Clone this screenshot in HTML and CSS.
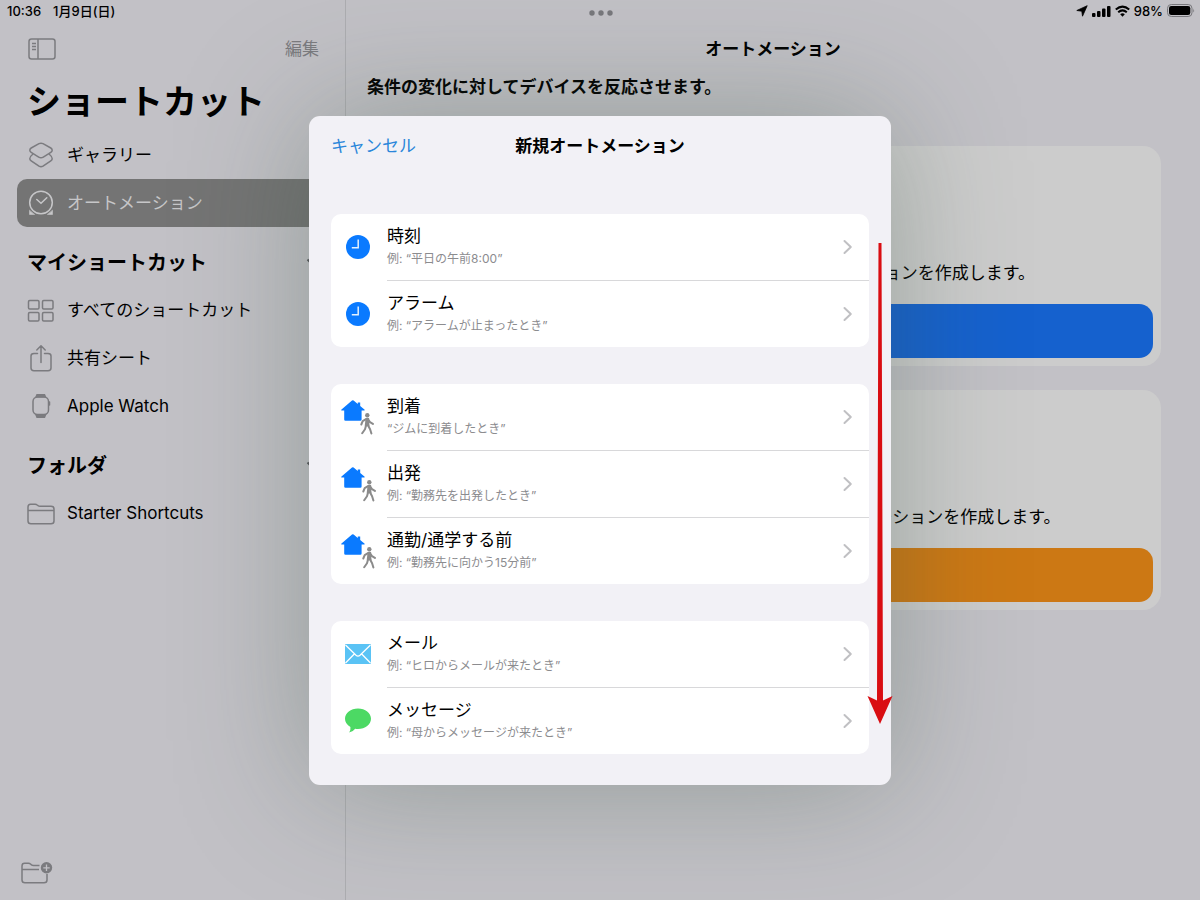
FILE: index.html
```html
<!DOCTYPE html>
<html lang="ja">
<head>
<meta charset="utf-8">
<meta name="viewport" content="width=device-width, initial-scale=1">
<title>ショートカット</title>
<link rel="stylesheet" href="styles.css">
</head>
<body>
<svg class="sprite" aria-hidden="true">
  <symbol id="chevron" viewBox="0 0 10 16"><path d="M1.500 2l6.300 6-6.300 6" fill="none" stroke="currentColor" stroke-width="2" stroke-linecap="round" stroke-linejoin="round"/></symbol>
  <symbol id="clock" viewBox="0 0 24 24"><circle cx="12" cy="12" r="12" fill="#0a7aff"/><path d="M12.200 4.500v8.200H5.800" fill="none" stroke="#e3f1ff" stroke-width="1.500"/></symbol>
  <symbol id="house" viewBox="0 0 24 22"><path d="M11 .6q.8-.6 1.600 0L16.800 4V2.600h2.400V6l4.200 3.500q.6.600 0 1h-2.800v9q0 1.300-1.300 1.300H4.500q-1.300 0-1.300-1.300v-9H.5q-.7-.4 0-1z" fill="#0a7aff"/></symbol>
  <symbol id="walker" viewBox="0 0 14 22"><circle cx="7.300" cy="2.300" r="2.200" fill="#8b8b8b"/><path d="M6 6.200L2.700 8.200 1.300 11.500M8 6.400l2 2.800 2.900 1.700M6.200 12L5 16.300 2.200 20.300M7.800 12l2.300 4.200 1.300 4.300" fill="none" stroke="#8b8b8b" stroke-width="2" stroke-linecap="round" stroke-linejoin="round"/><path d="M5.600 5q1.700-.7 3.500 0l.4 8.300H4.700z" fill="#8b8b8b"/></symbol>
</svg>

<div class="app">
  <aside class="sidebar">
    <div class="toolbar">
      <button class="plain" aria-label="サイドバー">
        <svg width="28" height="22" viewBox="0 0 28 22" fill="none" stroke="currentColor" stroke-width="1.500"><rect x="1" y="1" width="26" height="20" rx="2.500"/><path d="M10 1v20M4 5.500h4M4 8.500h4M4 11.500h4"/></svg>
      </button>
      <button class="plain edit">編集</button>
    </div>
    <h1 class="title">ショートカット</h1>
    <nav>
      <ul class="nav">
        <li><a class="item" href="#">
          <svg width="28" height="28" viewBox="0 0 28 28" fill="none" stroke="currentColor" stroke-width="1.500" stroke-linejoin="round"><path d="M12 2.700q2-1 4 0l7.800 4.300q1.400.9 1.400 2.200t-1.400 2.200l-7.500 4.700q-2.300 1.400-4.600 0l-7.500-4.700Q2.800 10.500 2.800 9.200T4.200 7z"/><path d="M6 13q-3.200 2.500-3.200 4.700 0 1.200 1.400 2.100l7.800 5.400q2 1.200 4 0l7.800-5.400q1.400-.9 1.400-2.100Q25.200 15.500 22 13"/></svg>
          <span>ギャラリー</span></a></li>
        <li><a class="item selected" href="#" aria-current="page">
          <svg width="28" height="28" viewBox="0 0 28 28" fill="none" stroke="currentColor" stroke-width="1.500" stroke-linecap="round"><circle cx="14" cy="13.500" r="11.300"/><path d="M9.800 10.500l4.200 3.800 5.800-5.600"/><path d="M2.500 21.500v4h4.800zM25.500 21.500v4h-4.800z" fill="currentColor" stroke-width=".6"/></svg>
          <span>オートメーション</span></a></li>
      </ul>
      <h2 class="section">マイショートカット
        <svg class="caret" width="14" height="9" viewBox="0 0 14 9"><path d="M1.500 1.500L7 7l5.500-5.500" fill="none" stroke="currentColor" stroke-width="2"/></svg></h2>
      <ul class="nav">
        <li><a class="item" href="#">
          <svg width="28" height="28" viewBox="0 0 28 28" fill="none" stroke="currentColor" stroke-width="1.500"><rect x="1.500" y="4.500" width="10.500" height="8.500" rx="1.200"/><rect x="15.500" y="4.500" width="10.500" height="8.500" rx="1.200"/><rect x="1.500" y="16.500" width="10.500" height="8.500" rx="1.200"/><rect x="15.500" y="16.500" width="10.500" height="8.500" rx="1.200"/></svg>
          <span>すべてのショートカット</span></a></li>
        <li><a class="item" href="#">
          <svg width="28" height="28" viewBox="0 0 28 28" fill="none" stroke="currentColor" stroke-width="1.500" stroke-linecap="round" stroke-linejoin="round"><path d="M10.500 9.500H7Q4 9.500 4 12v12q0 2.700 3 2.700h14q3 0 3-2.700V12q0-2.500-3-2.500h-3.500M14 18.500V2M9.800 6L14 1.800 18.200 6"/></svg>
          <span>共有シート</span></a></li>
        <li><a class="item" href="#">
          <svg width="28" height="28" viewBox="0 0 28 28"><rect x="6" y="5" width="15.500" height="17.500" rx="4.500" fill="none" stroke="currentColor" stroke-width="1.500"/><path d="M9.500 2H18l1.500 3.500H8zM8 22.300h11.500L18 26H9.500z" fill="currentColor"/><path d="M22.500 10v3" stroke="currentColor" stroke-width="1.500" stroke-linecap="round"/></svg>
          <span>Apple Watch</span></a></li>
      </ul>
      <h2 class="section">フォルダ
        <svg class="caret" width="14" height="9" viewBox="0 0 14 9"><path d="M1.500 1.500L7 7l5.500-5.500" fill="none" stroke="currentColor" stroke-width="2"/></svg></h2>
      <ul class="nav">
        <li><a class="item" href="#">
          <svg width="28" height="28" viewBox="0 0 28 28" fill="none" stroke="currentColor" stroke-width="1.500" stroke-linejoin="round"><path d="M1 11.500h26M1 8q0-2.800 2.500-2.800h4.700q1.200 0 2 .8l.9.700q.7.600 2 .600h10.900Q27 7.300 27 10v12q0 2.800-3 2.800H4q-3 0-3-2.800z"/></svg>
          <span>Starter Shortcuts</span></a></li>
      </ul>
    </nav>
    <button class="plain new-folder" aria-label="新規フォルダ">
      <svg width="32" height="24" viewBox="0 0 32 24" fill="none" stroke="currentColor" stroke-width="1.500" stroke-linejoin="round"><path d="M18.500 4.500h-6q-1.300 0-2-.6l-1-.9q-.8-.7-2-.700H3.500Q1 2.300 1 5v14q0 2.800 3 2.800h19q3 0 3-2.800v-6M1 8.500h17"/><circle cx="25.500" cy="6.800" r="5.700" fill="currentColor" stroke="none"/><path d="M25.500 3.600V10M22.300 6.800h6.400" stroke="#c2c1c6" stroke-width="1.300"/></svg>
    </button>
  </aside>

  <main class="main">
    <h2 class="main-title">オートメーション</h2>
    <p class="lead">条件の変化に対してデバイスを反応させます。</p>
    <div class="cards">
      <section class="card">
        <h3 class="card-title">個人用オートメーション</h3>
        <p class="card-text">自分のデバイスで実行できる個人用オートメーションを作成します。</p>
        <button class="create create-blue">個人用オートメーションを作成</button>
      </section>
      <section class="card">
        <h3 class="card-title">ホームオートメーション</h3>
        <p class="card-text">ホームにいる全員のために実行するホームオートメーションを作成します。</p>
        <button class="create create-orange">ホームオートメーションを作成</button>
      </section>
    </div>
  </main>
</div>

<header class="status">
  <div class="status-side"><span>10:36</span><span>1月9日(日)</span></div>
  <svg width="24" height="6" viewBox="0 0 24 6" fill="#77777b"><circle cx="3" cy="3" r="2.700"/><circle cx="12" cy="3" r="2.700"/><circle cx="21" cy="3" r="2.700"/></svg>
  <div class="status-side status-right">
    <svg width="12" height="12" viewBox="0 0 12 12"><path d="M11.200.7L6.500 11.200 5.800 6.200.8 5.500z" stroke="#000" stroke-width=".8" stroke-linejoin="round"/></svg>
    <svg width="19" height="12" viewBox="0 0 19 12"><rect y="8" width="3.500" height="4" rx="1"/><rect x="5" y="6" width="3.500" height="6" rx="1"/><rect x="10" y="3.500" width="3.500" height="8.500" rx="1"/><rect x="15" y="1" width="3.500" height="11" rx="1"/></svg>
    <svg width="15" height="12" viewBox="0 0 15 12" fill="none" stroke="#000" stroke-width="2"><path d="M.8 4.600q6.700-6 13.400 0M3.200 7.300q4.300-3.800 8.600 0"/><path d="M7.500 11.700L5.200 9.300q2.300-1.900 4.600 0z" fill="#000" stroke="none"/></svg>
    <span>98%</span>
    <svg width="28" height="13" viewBox="0 0 28 13"><rect x=".5" y=".5" width="24.500" height="12" rx="3.800" fill="none" stroke="#77777b"/><rect x="2" y="2" width="21.300" height="9" rx="2.300"/><path d="M26.300 4.500q1.500 2 0 4z" fill="#77777b"/></svg>
  </div>
</header>

<div class="overlay">
  <div class="modal" role="dialog" aria-labelledby="modal-title">
    <div class="modal-head">
      <button class="cancel">キャンセル</button>
      <h2 class="modal-title" id="modal-title">新規オートメーション</h2>
    </div>
    <ul class="group">
      <li><button class="row"><span class="icon"><svg width="24" height="24"><use href="#clock"/></svg></span>
        <span class="body"><span class="text"><span class="name">時刻</span><span class="hint">例: “平日の午前8:00”</span></span><svg class="chev" width="10" height="16"><use href="#chevron"/></svg></span></button></li>
      <li><button class="row"><span class="icon"><svg width="24" height="24"><use href="#clock"/></svg></span>
        <span class="body"><span class="text"><span class="name">アラーム</span><span class="hint">例: “アラームが止まったとき”</span></span><svg class="chev" width="10" height="16"><use href="#chevron"/></svg></span></button></li>
    </ul>
    <ul class="group">
      <li><button class="row"><span class="icon"><svg width="54" height="66"><use href="#house" x="10" y="16" width="24" height="22"/><use href="#walker" x="29" y="29" width="14" height="22"/></svg></span>
        <span class="body"><span class="text"><span class="name">到着</span><span class="hint">“ジムに到着したとき”</span></span><svg class="chev" width="10" height="16"><use href="#chevron"/></svg></span></button></li>
      <li><button class="row"><span class="icon"><svg width="54" height="66"><use href="#house" x="10" y="16" width="24" height="22"/><use href="#walker" x="31" y="29" width="14" height="22"/></svg></span>
        <span class="body"><span class="text"><span class="name">出発</span><span class="hint">例: “勤務先を出発したとき”</span></span><svg class="chev" width="10" height="16"><use href="#chevron"/></svg></span></button></li>
      <li><button class="row"><span class="icon"><svg width="54" height="66"><use href="#house" x="10" y="16" width="24" height="22"/><use href="#walker" x="31" y="29" width="14" height="22"/></svg></span>
        <span class="body"><span class="text"><span class="name">通勤/通学する前</span><span class="hint">例: “勤務先に向かう15分前”</span></span><svg class="chev" width="10" height="16"><use href="#chevron"/></svg></span></button></li>
    </ul>
    <ul class="group">
      <li><button class="row"><span class="icon"><svg width="26" height="20" viewBox="0 0 26 20"><rect width="26" height="20" rx="1" fill="#5ac3f5"/><path d="M.5 1l10.500 10.300q2 1.700 4 0L25.500 1M.5 19l8.800-9M25.500 19l-8.800-9" fill="none" stroke="#fff" stroke-width="1.300"/></svg></span>
        <span class="body"><span class="text"><span class="name">メール</span><span class="hint">例: “ヒロからメールが来たとき”</span></span><svg class="chev" width="10" height="16"><use href="#chevron"/></svg></span></button></li>
      <li><button class="row"><span class="icon"><svg width="26" height="25" viewBox="0 0 26 25"><path d="M13 .5C20.200.5 26 5 26 10.800S20.200 21 13 21q-1.400 0-2.800-.3-2.500 3.300-6 3.800 1.700-2.200 1.200-5.600Q0 16 0 10.800C0 5 5.800.5 13 .5z" fill="#4cd964"/></svg></span>
        <span class="body"><span class="text"><span class="name">メッセージ</span><span class="hint">例: “母からメッセージが来たとき”</span></span><svg class="chev" width="10" height="16"><use href="#chevron"/></svg></span></button></li>
    </ul>
    <svg class="arrow" width="26" height="482" viewBox="0 0 26 482"><path d="M11.500 0h3L16 457.500l9.500-4.500L13 481 .5 453l9.500 4.500z" fill="#d90d12"/></svg>
  </div>
</div>
</body>
</html>
```
FILE: styles.css
```css
* { box-sizing: border-box; }

body {
  margin: 0;
  background: #c2c1c6;
  color: #000;
  font: 17px/24px Inter, "Noto Sans CJK JP", sans-serif;
}

h1, h2, h3, p, ul { margin: 0; padding: 0; }
ul { list-style: none; }
svg { display: block; flex: none; }
button { font: inherit; border: 0; cursor: pointer; }
.sprite { position: absolute; width: 0; height: 0; }

.app {
  display: grid;
  grid-template-columns: 346px 1fr;
  min-height: 100vh;
}

/* Status bar */
.status {
  position: absolute;
  inset: 0 0 auto;
  display: grid;
  grid-template-columns: 1fr auto 1fr;
  align-items: center;
  height: 21px;
  padding: 0 5px 0 7px;
  font-size: 13px;
  font-weight: 500;
  line-height: 20px;
}
.status > svg { margin-top: 5px; }
.status-side { display: flex; align-items: center; gap: 12px; }
.status-right { justify-content: flex-end; gap: 4px; }

/* Sidebar */
.sidebar {
  display: flex;
  flex-direction: column;
  padding: 37px 17px 15px;
  border-right: 1px solid #adadb1;
}
.plain { padding: 0; background: none; color: #7b7b7f; }
.toolbar {
  display: flex;
  justify-content: space-between;
  align-items: center;
  height: 24px;
  padding: 0 9px 0 11px;
}
.title {
  padding: 15px 10px 4px;
  font-size: 34px;
  line-height: 51px;
}
.item {
  display: flex;
  align-items: center;
  gap: 12px;
  height: 48px;
  padding: 0 10px;
  border-radius: 10px;
  color: #000;
  text-decoration: none;
}
.item svg { color: #7b7b7f; }
.item.selected, .item.selected svg { color: #c6c6c8; }
.item.selected { background: #747474; }
.section {
  display: flex;
  justify-content: space-between;
  align-items: center;
  height: 59px;
  padding: 12px 8px 0 10px;
  font-size: 20px;
}
.caret { color: #55555a; }
.new-folder { align-self: flex-start; margin: auto 0 0 4px; }

/* Main pane */
.main { padding-top: 37px; }
.main-title { font-size: 17px; text-align: center; }
.lead { padding: 14px 21px 0; font-weight: 600; }
.cards {
  display: grid;
  gap: 24px;
  padding: 47px 39px;
}
.card {
  display: flex;
  flex-direction: column;
  align-items: center;
  padding: 67px 8px 8px;
  border-radius: 18px;
  background: #cccccc;
}
.card-title { padding-bottom: 24px; font-size: 20px; }
.card-text { padding-bottom: 19px; white-space: nowrap; }
.create {
  width: 100%;
  height: 54px;
  border-radius: 14px;
  color: #ccc;
  font-size: 16px;
  font-weight: 600;
}
.create-blue { background: #1561ce; }
.create-orange { background: #cc7814; }

/* Dialog */
.overlay {
  position: absolute;
  inset: 0;
  display: grid;
  place-items: center;
}
.modal {
  position: relative;
  display: flex;
  flex-direction: column;
  gap: 37px;
  width: min(582px, 100%);
  padding: 0 22px 31px;
  border-radius: 11px;
  background: #f2f1f6;
  box-shadow: 0 0 130px rgb(60 85 68 / 36%);
}
.modal-head {
  display: grid;
  grid-template-columns: 1fr auto 1fr;
  align-items: center;
  height: 61px;
}
.cancel { justify-self: start; padding: 0; background: none; color: #2a86da; }
.modal-title { font-size: 17px; }
.group { overflow: hidden; border-radius: 10px; background: #fff; }
.row {
  display: flex;
  align-items: flex-start;
  gap: 2px;
  width: 100%;
  padding: 0;
  background: none;
  color: #000;
  text-align: left;
}
.icon { display: grid; flex: none; place-items: center; width: 54px; height: 66px; }
.body {
  display: flex;
  flex: 1;
  justify-content: space-between;
  align-items: center;
  height: 66px;
  padding-right: 16px;
}
li:not(:last-child) .body { height: 67px; border-bottom: 1px solid #d8d8da; }
.text { display: flex; flex-direction: column; padding-top: 1px; }
.hint { color: #8c8c8f; font-size: 12px; line-height: 22px; }
.chev { color: #c0c0c3; }
.arrow { position: absolute; top: 127px; right: -2px; }
```
